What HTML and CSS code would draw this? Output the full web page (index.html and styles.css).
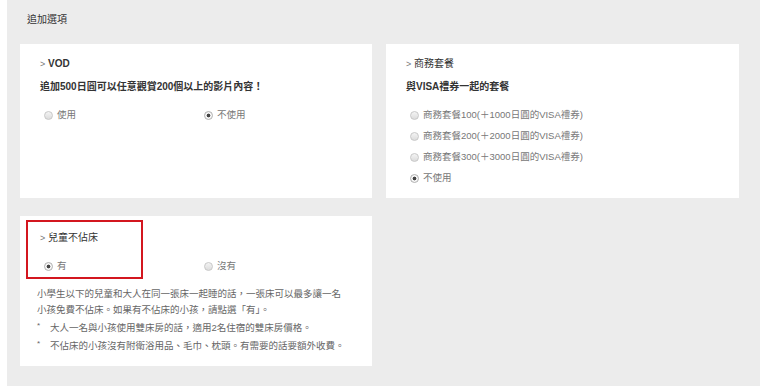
FILE: index.html
```html
<html>
<head>
<meta http-equiv="Content-Type" content="text/html; charset=utf-8">
<title>追加選項</title>
<link rel="stylesheet" href="styles.css">
</head>
<body>
<div class="panel">
  <div class="panel-title">追加選項</div>

  <div class="cards">
    <!-- VOD -->
    <div class="card">
      <div class="card-title"><span class="arrow">&gt;</span> <b>VOD</b></div>
      <div class="card-desc">追加500日圓可以任意觀賞200個以上的影片內容！</div>
      <div class="choices two">
        <label class="choice"><input type="radio" name="vod"> 使用</label>
        <label class="choice"><input type="radio" name="vod" checked> 不使用</label>
      </div>
    </div>

    <!-- business -->
    <div class="card">
      <div class="card-title"><span class="arrow">&gt;</span> 商務套餐</div>
      <div class="card-desc">與VISA禮券一起的套餐</div>
      <div class="choices list">
        <label class="choice"><input type="radio" name="biz"> 商務套餐100(＋1000日圓的VISA禮券)</label>
        <label class="choice"><input type="radio" name="biz"> 商務套餐200(＋2000日圓的VISA禮券)</label>
        <label class="choice"><input type="radio" name="biz"> 商務套餐300(＋3000日圓的VISA禮券)</label>
        <label class="choice"><input type="radio" name="biz" checked> 不使用</label>
      </div>
    </div>

    <!-- child no bed -->
    <div class="card child">
      <div class="card-title"><span class="arrow">&gt;</span> 兒童不佔床</div>
      <div class="choices two">
        <label class="choice"><input type="radio" name="kid" checked> 有</label>
        <label class="choice"><input type="radio" name="kid"> 沒有</label>
      </div>
      <p class="note">小學生以下的兒童和大人在同一張床一起睡的話，一張床可以最多讓一名小孩免費不佔床。如果有不佔床的小孩，請點選「有」。</p>
      <p class="star"><span>*</span>大人一名與小孩使用雙床房的話，適用2名住宿的雙床房價格。</p>
      <p class="star"><span>*</span>不佔床的小孩沒有附衛浴用品、毛巾、枕頭。有需要的話要額外收費。</p>
      <div class="mark"></div>
    </div>
  </div>
</div>
</body>
</html>
```

FILE: styles.css
```css
html,body{
  margin:0;
  background:#fff;
  font-family:"Liberation Sans","Noto Sans CJK TC",sans-serif;
  font-size:9.5px;
  color:#666;
}

.panel{
  margin-left:7px;
  width:753px;
  height:386px;
  box-sizing:border-box;
  padding:12px 21px 0 13px;
  background:#ececec;
}
.panel-title{
  margin:0 0 16px 7px;
  line-height:16px;
  font-size:10px;
  color:#333;
}

.cards{
  display:grid;
  grid-template-columns:352px 353px;
  grid-template-rows:154px 150px;
  column-gap:14px;
  row-gap:18px;
}
.card{
  position:relative;
  background:#fff;
  padding:12px 20px 10px 20px;
}
.card.child{ padding-top:14px; }

.card-title{
  line-height:16px;
  font-size:10px;
  color:#333;
}
.card-title b{ font-weight:bold; }
.arrow{ color:#777; font-size:9px; }

.card-desc{
  margin-top:7px;
  line-height:16px;
  font-size:10px;
  font-weight:bold;
  color:#333;
}

.choices{ margin-top:12px; padding-left:4px; }
.choices.two{ display:grid; grid-template-columns:160px 160px; }
.choices.list{ display:flex; flex-direction:column; gap:5px; }
.choice{
  display:flex;
  align-items:center;
  gap:4px;
  line-height:16px;
  color:#777;
}
.choice input{
  -webkit-appearance:none;
  appearance:none;
  margin:0;
  width:9px;
  height:9px;
  border-radius:50%;
  border:1px solid #c8c8c8;
  background:linear-gradient(#f4f4f4,#dcdcdc);
  box-sizing:border-box;
}
.choice input:checked{
  background:radial-gradient(circle,#444 0,#444 1.6px,#f6f6f6 2.2px);
  border-color:#b0b0b0;
}

.note{
  width:310px;
  margin:12px 0 0 -3px;
  line-height:16px;
}
.star{
  margin:2px 0 0 -3px;
  line-height:16px;
}
.star span{
  display:inline-block;
  width:13px;
  font-size:8px;
  vertical-align:top;
  line-height:12px;
}

/* red highlight */
.mark{
  position:absolute;
  left:6px;
  top:4px;
  width:113px;
  height:55px;
  border:2px solid #d3161f;
}
```
